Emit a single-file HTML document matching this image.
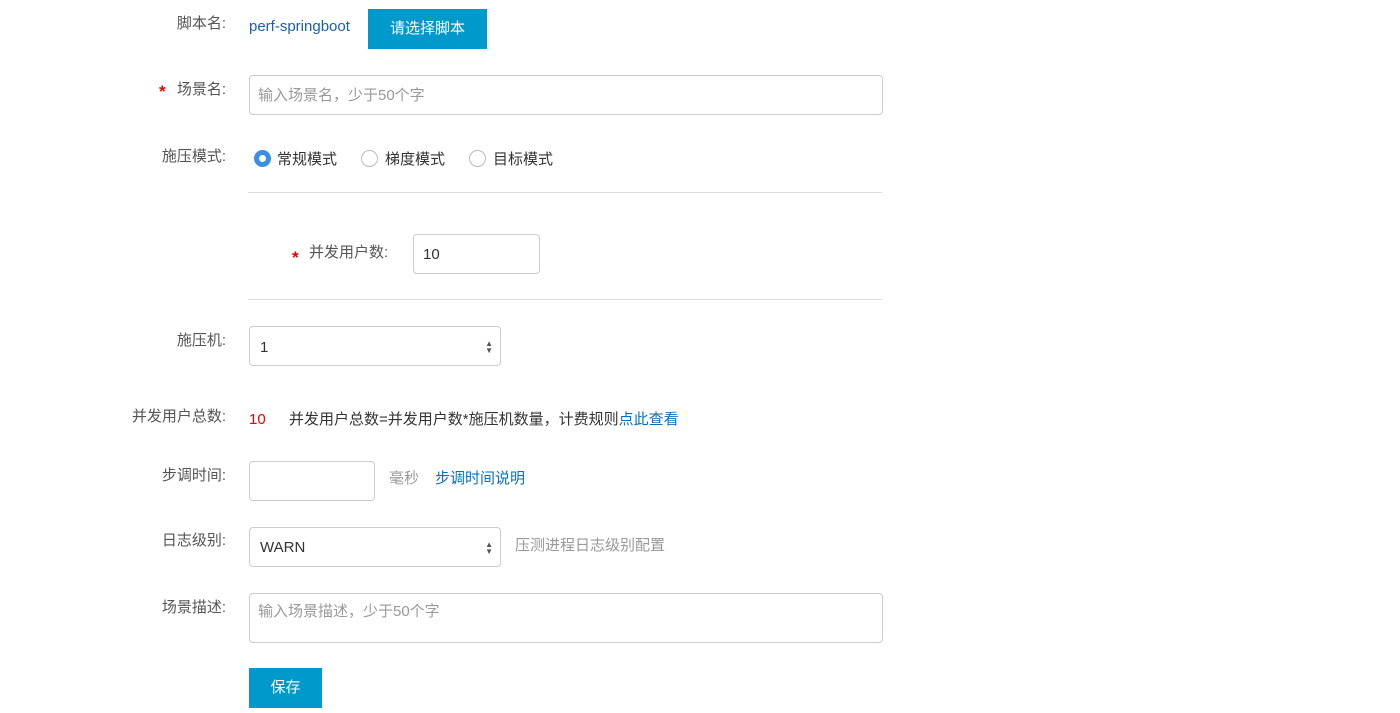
<!DOCTYPE html>
<html><head><meta charset="utf-8"><style>
body{margin:0;width:1400px;height:713px;background:#fff;position:relative;overflow:hidden;font-family:"Liberation Sans","Noto Sans CJK SC",sans-serif;font-size:15px;color:#333}
.a{position:absolute;white-space:nowrap;line-height:20px}
.l{position:absolute;right:1174px;white-space:nowrap;line-height:20px;color:#555}
.star{color:#e00;font-size:17px;font-weight:bold}
.box{position:absolute;border:1px solid #ccc;border-radius:4px;box-sizing:border-box;background:#fff}
.ph{color:#999}
.btn{position:absolute;background:#0099cc;color:#fff;text-align:center;font-size:15px}
.hr{position:absolute;left:248px;width:634px;height:1px;background:#ddd}
.radio{position:absolute;width:17px;height:17px;border:1px solid #bbb;border-radius:50%;box-sizing:border-box;background:#fff}
.arr{position:absolute;right:7px;top:13px;font-size:8px;line-height:7px;color:#555}
.link{color:#0a6fc2}
</style></head><body>
<div class="l" style="top:14px">脚本名:</div>
<div class="a link" style="left:249px;top:17px;color:#1a5fb4">perf-springboot</div>
<div class="btn" style="left:368px;top:9px;width:119px;height:40px;line-height:40px">请选择脚本</div>

<div class="a star" style="left:159px;top:82px">*</div>
<div class="l" style="top:80px">场景名:</div>
<div class="box" style="left:249px;top:75px;width:634px;height:40px"><span class="a ph" style="left:8px;top:10px">输入场景名，少于50个字</span></div>

<div class="l" style="top:147px">施压模式:</div>
<div class="radio" style="left:254px;top:150px;border:none;background:#3a8ee6"><div style="position:absolute;left:5px;top:5px;width:7px;height:7px;border-radius:50%;background:#fff"></div></div>
<div class="a" style="left:277px;top:150px">常规模式</div>
<div class="radio" style="left:361px;top:150px"></div>
<div class="a" style="left:385px;top:150px">梯度模式</div>
<div class="radio" style="left:469px;top:150px"></div>
<div class="a" style="left:493px;top:150px">目标模式</div>

<div class="hr" style="top:192px"></div>
<div class="a star" style="left:292px;top:248px">*</div>
<div class="a" style="left:309px;top:243px;color:#555">并发用户数:</div>
<div class="box" style="left:413px;top:234px;width:127px;height:40px"><span class="a" style="left:9px;top:10px">10</span></div>
<div class="hr" style="top:299px"></div>

<div class="l" style="top:331px">施压机:</div>
<div class="box" style="left:249px;top:326px;width:252px;height:40px"><span class="a" style="left:10px;top:11px">1</span><div class="arr">▲<br>▼</div></div>

<div class="l" style="top:407px">并发用户总数:</div>
<div class="a" style="left:249px;top:410px;color:#e00">10</div>
<div class="a" style="left:289px;top:410px">并发用户总数=并发用户数*施压机数量，计费规则<span class="link">点此查看</span></div>

<div class="l" style="top:466px">步调时间:</div>
<div class="box" style="left:249px;top:461px;width:126px;height:40px"></div>
<div class="a" style="left:389px;top:469px;color:#999">毫秒</div>
<div class="a link" style="left:435px;top:469px">步调时间说明</div>

<div class="l" style="top:531px">日志级别:</div>
<div class="box" style="left:249px;top:527px;width:252px;height:40px"><span class="a" style="left:10px;top:10px">WARN</span><div class="arr">▲<br>▼</div></div>
<div class="a" style="left:515px;top:536px;color:#999">压测进程日志级别配置</div>

<div class="l" style="top:598px">场景描述:</div>
<div class="box" style="left:249px;top:593px;width:634px;height:50px"><span class="a ph" style="left:8px;top:8px">输入场景描述，少于50个字</span></div>

<div class="btn" style="left:249px;top:668px;width:73px;height:40px;line-height:40px">保存</div>
</body></html>
